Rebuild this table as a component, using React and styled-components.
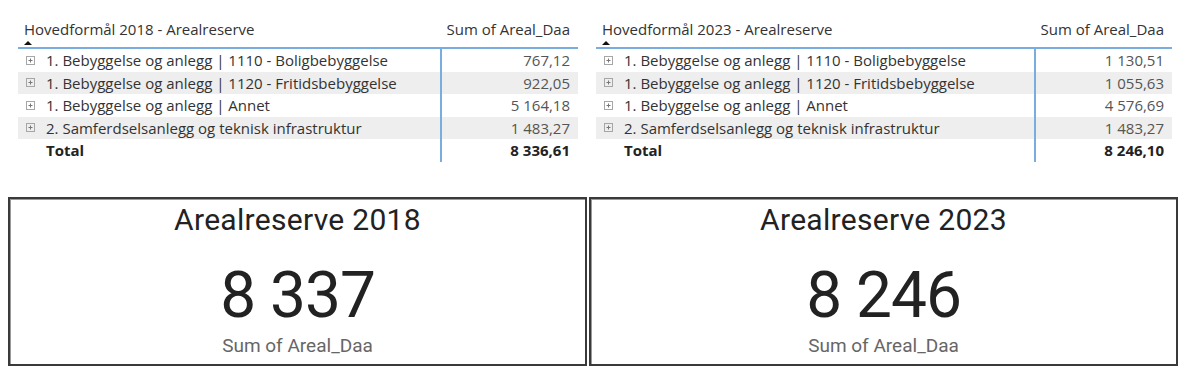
import styled, { createGlobalStyle } from "styled-components";

const Global = createGlobalStyle`
  html, body { margin: 0; padding: 0; background: #ffffff; }
  body { font-family: "Open Sans", "Noto Sans", sans-serif; }
`;

const Page = styled.div`
  width: 1200px;
  height: 383px;
  overflow: hidden;
  display: flex;
  flex-direction: column;
`;

const TopRow = styled.div`
  display: flex;
  gap: 18px;
  padding-left: 18px;
`;

const Matrix = styled.div`
  width: ${({ w }) => w}px;
  display: grid;
  grid-template-columns: ${({ labelW }) => labelW}px 1fr;
`;

const HeadCell = styled.div`
  position: relative;
  box-sizing: border-box;
  height: 49px;
  border-bottom: 2px solid #79ade0;
  padding: 19px ${({ right }) => (right ? "8px" : "0")} 0 6px;
  font-size: 15px;
  line-height: 20px;
  color: #333;
  text-align: ${({ right }) => (right ? "right" : "left")};
  white-space: nowrap;
`;

const SortArrow = styled.span`
  position: absolute;
  left: 6px;
  top: 41px;
  width: 0;
  height: 0;
  border-left: 4px solid transparent;
  border-right: 4px solid transparent;
  border-bottom: 4px solid #111;
`;

const Cell = styled.div`
  height: 22.5px;
  display: flex;
  align-items: center;
  font-size: 15px;
  color: ${({ value, bold }) => (bold ? "#222" : value ? "#555" : "#333")};
  font-weight: ${({ bold }) => (bold ? 700 : 400)};
  background: ${({ shade }) => (shade ? "#eeeeee" : "transparent")};
  justify-content: ${({ value }) => (value ? "flex-end" : "flex-start")};
  padding: ${({ value }) => (value ? "0 8px 0 0" : "0 0 0 8px")};
  border-left: ${({ value }) => (value ? "2px solid #79ade0" : "none")};
  white-space: nowrap;
`;

const Expand = styled.svg`
  width: 9px;
  height: 9px;
  margin-right: 11px;
  flex: none;
`;

const Spacer = styled.span`
  display: inline-block;
  width: 20px;
`;

const CardRow = styled.div`
  display: flex;
  gap: 2px;
  margin-top: 35px;
  padding-left: 8px;
`;

const Card = styled.div`
  width: ${({ w }) => w}px;
  height: 169px;
  box-sizing: border-box;
  border: 2px solid #3a3a3a;
  box-shadow: inset 1px 1px 0 #9a9a9a;
  display: flex;
  flex-direction: column;
  align-items: center;
  font-family: "Roboto", "DejaVu Sans", sans-serif;
`;

const CardTitle = styled.div`
  margin-top: 3px;
  font-size: 30px;
  line-height: 36px;
  color: #222;
  letter-spacing: 0.3px;
`;

const BigNumber = styled.div`
  margin-top: 24px;
  font-size: 64px;
  line-height: 68px;
  color: #222;
  letter-spacing: -1px;
`;

const CardLabel = styled.div`
  margin-top: 5px;
  font-size: 19px;
  line-height: 22px;
  color: #666;
`;

function PlusBox() {
  return (
    <Expand viewBox="0 0 9 9">
      <rect x="0.5" y="0.5" width="8" height="8" fill="none" stroke="#a6a6a6" />
      <path d="M2.5 4.5h4M4.5 2.5v4" stroke="#777" />
    </Expand>
  );
}

function Table({ title, w, labelW, rows, total }) {
  return (
    <Matrix w={w} labelW={labelW}>
      <HeadCell>
        {title}
        <SortArrow />
      </HeadCell>
      <HeadCell right>Sum of Areal_Daa</HeadCell>
      {rows.map(([label, value], i) => [
        <Cell key={`l${i}`} shade={i % 2 === 1}>
          <PlusBox />
          {label}
        </Cell>,
        <Cell key={`v${i}`} value shade={i % 2 === 1}>
          {value}
        </Cell>,
      ])}
      <Cell bold>
        <Spacer />
        Total
      </Cell>
      <Cell value bold>
        {total}
      </Cell>
    </Matrix>
  );
}

const labels = [
  "1. Bebyggelse og anlegg | 1110 - Boligbebyggelse",
  "1. Bebyggelse og anlegg | 1120 - Fritidsbebyggelse",
  "1. Bebyggelse og anlegg | Annet",
  "2. Samferdselsanlegg og teknisk infrastruktur",
];

const values2018 = ["767,12", "922,05", "5 164,18", "1 483,27"];
const values2023 = ["1 130,51", "1 055,63", "4 576,69", "1 483,27"];

export default function App() {
  return (
    <Page>
      <Global />
      <TopRow>
        <Table
          title="Hovedformål 2018 - Arealreserve"
          w={560}
          labelW={422}
          rows={labels.map((l, i) => [l, values2018[i]])}
          total="8 336,61"
        />
        <Table
          title="Hovedformål 2023 - Arealreserve"
          w={576}
          labelW={438}
          rows={labels.map((l, i) => [l, values2023[i]])}
          total="8 246,10"
        />
      </TopRow>
      <CardRow>
        <Card w={579}>
          <CardTitle>Arealreserve 2018</CardTitle>
          <BigNumber>8 337</BigNumber>
          <CardLabel>Sum of Areal_Daa</CardLabel>
        </Card>
        <Card w={589}>
          <CardTitle>Arealreserve 2023</CardTitle>
          <BigNumber>8 246</BigNumber>
          <CardLabel>Sum of Areal_Daa</CardLabel>
        </Card>
      </CardRow>
    </Page>
  );
}
